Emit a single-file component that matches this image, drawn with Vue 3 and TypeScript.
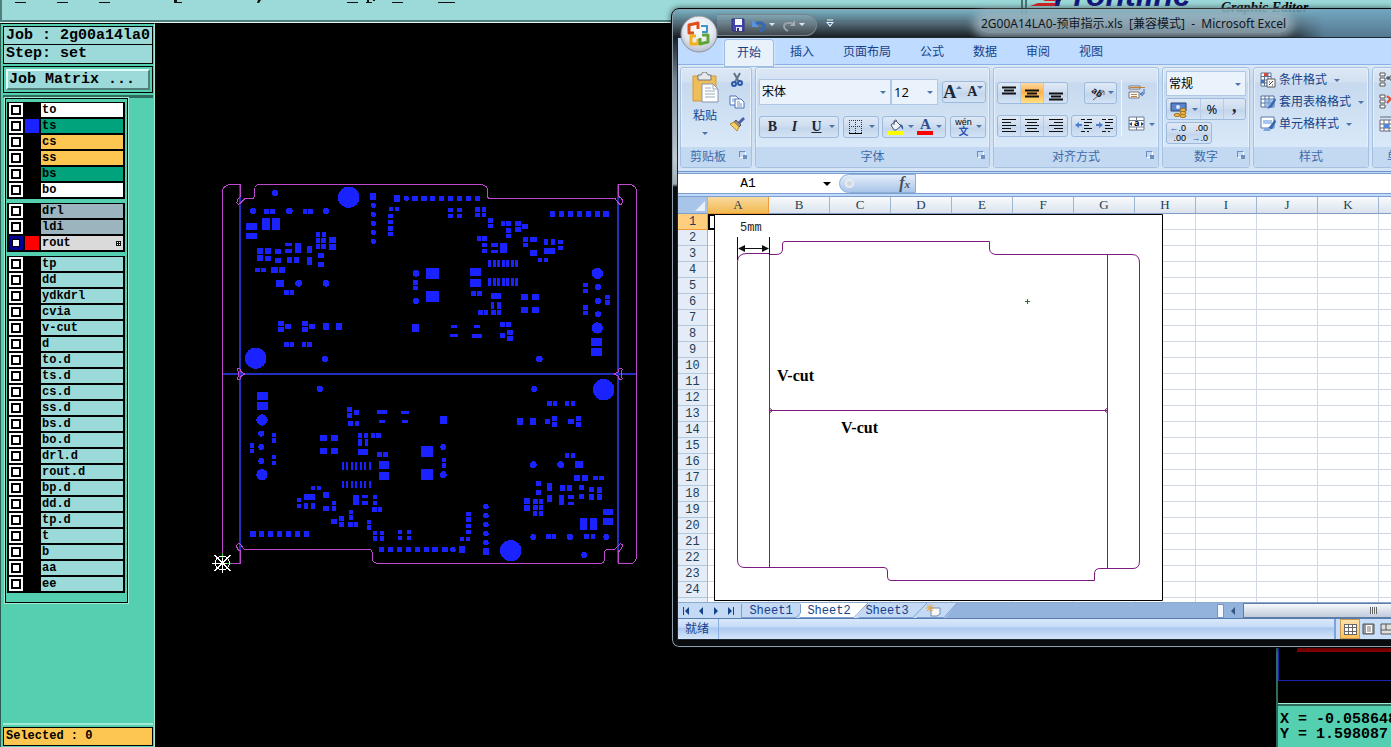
<script setup lang="ts">
import { ref } from 'vue'

interface Layer {
  name: string
  tone: string
  swatch?: string
  work?: boolean
}

const plain = (names: string): Layer[] => names.split(' ').map((name) => ({ name, tone: 'aqua' }))

const layerGroups: Layer[][] = [
  [
    { name: 'to', tone: 'white' },
    { name: 'ts', tone: 'green', swatch: 'blue' },
    { name: 'cs', tone: 'amber' },
    { name: 'ss', tone: 'amber' },
    { name: 'bs', tone: 'green' },
    { name: 'bo', tone: 'white' },
  ],
  [
    { name: 'drl', tone: 'slate' },
    { name: 'ldi', tone: 'slate' },
    { name: 'rout', tone: 'grey', swatch: 'red', work: true },
  ],
  plain('tp dd ydkdrl cvia v-cut d to.d ts.d cs.d ss.d bs.d bo.d drl.d rout.d bp.d dd.d tp.d t b aa ee'),
]

// Board units: three per screen pixel. Each pad is x, y, width, height.
type Pad = [number, number, number, number]
type Disc = [number, number, number]

const row = (xs: number[], y: number, w: number, h: number): Pad[] => xs.map((x) => [x, y, w, h])

const leftPads: Pad[] = [
  [465, 54, 19, 21], [537, 60, 19, 20], [590, 64, 18, 13], [618, 64, 18, 13],
  [147, 102, 14, 14], [165, 102, 15, 14], [264, 102, 12, 14], [279, 102, 15, 14],
  [93, 144, 32, 20], [93, 174, 32, 17], [141, 129, 23, 35], [171, 129, 23, 35],
  [303, 171, 12, 14], [321, 171, 12, 14], [303, 189, 12, 14], [319, 189, 14, 14],
  [303, 207, 12, 14], [319, 207, 14, 14], [342, 186, 20, 18], [342, 207, 20, 17],
  [210, 204, 20, 9], [210, 223, 20, 10], [240, 204, 17, 30], [276, 213, 15, 22],
  [276, 246, 15, 24], [309, 234, 17, 15], [309, 261, 17, 14],
  [126, 219, 17, 17], [150, 219, 17, 17], [126, 240, 17, 17], [150, 243, 17, 15],
  [180, 222, 17, 14], [180, 249, 17, 14], [216, 246, 15, 17], [237, 246, 15, 17],
  [120, 279, 15, 12], [138, 279, 15, 12], [168, 276, 20, 17], [192, 276, 18, 17],
  [183, 315, 24, 21], [207, 345, 14, 14], [225, 345, 12, 14],
  [189, 438, 17, 15], [189, 456, 17, 14], [210, 447, 18, 14],
  [261, 438, 17, 15], [261, 456, 17, 14], [282, 447, 17, 14],
  [324, 444, 18, 20], [363, 444, 18, 20],
  [207, 501, 14, 14], [225, 501, 12, 14], [261, 501, 12, 14], [276, 501, 15, 14],
  [519, 117, 15, 12], [519, 135, 15, 12], [519, 153, 15, 14], [519, 171, 15, 11],
  [522, 96, 12, 13], [540, 96, 12, 13], [594, 315, 14, 14], [594, 333, 14, 11],
  [591, 447, 21, 23], [633, 280, 38, 31], [633, 348, 38, 32],
]

const rightPads: Pad[] = [
  ...row([15, 42, 69, 96, 123, 150], 63, 15, 14),
  [69, 99, 14, 12], [69, 117, 14, 12], [96, 99, 14, 12], [96, 117, 14, 12],
  [150, 96, 14, 14], [171, 96, 12, 14], [150, 114, 14, 11], [171, 114, 12, 11],
  [189, 129, 14, 15], [189, 147, 14, 12], [228, 138, 12, 15], [243, 138, 15, 15],
  [270, 138, 17, 15], [270, 156, 17, 14], [291, 147, 18, 14], [243, 159, 14, 15],
  [243, 177, 14, 12], [156, 183, 12, 14], [171, 183, 15, 14], [171, 204, 14, 12],
  [171, 222, 14, 12], [198, 204, 20, 12], [198, 225, 20, 8], [225, 204, 20, 30],
  [294, 186, 14, 15], [294, 204, 14, 12], [315, 186, 20, 15], [315, 225, 20, 17],
  [357, 192, 12, 17], [378, 192, 12, 17], [399, 195, 14, 13], [399, 213, 14, 11],
  [357, 219, 33, 19], [339, 249, 12, 12], [357, 249, 12, 12],
  ...row([189, 204, 216, 231, 243, 258, 270], 255, 8, 20),
  ...row([189, 204, 216, 231, 243, 258, 270], 309, 8, 24),
  [135, 279, 32, 24], [135, 312, 32, 24], [138, 348, 15, 14], [156, 348, 15, 14],
  [198, 354, 30, 18], [198, 381, 9, 20], [216, 381, 12, 20],
  [159, 405, 15, 15], [177, 405, 12, 15], [198, 405, 14, 15], [216, 405, 12, 15],
  [288, 357, 21, 18], [321, 357, 22, 18], [288, 396, 21, 18], [321, 396, 22, 18],
  [225, 441, 14, 14], [243, 441, 15, 14], [246, 465, 17, 15], [225, 474, 15, 15],
  [246, 483, 17, 14], [78, 450, 18, 9], [75, 478, 24, 8], [147, 450, 18, 9], [141, 477, 30, 11],
  [474, 324, 14, 12], [474, 342, 14, 12], [474, 390, 14, 15], [474, 408, 14, 12],
  [540, 360, 14, 12], [540, 375, 14, 14], [498, 489, 33, 24], [498, 519, 33, 24],
  ...row([375, 402, 429, 456, 483, 510], 108, 15, 18),
  [534, 108, 19, 18],
]

const pads: Pad[] = [...leftPads, ...rightPads.map(([x, y, w, h]): Pad => [x + 630, y, w, h])]

const discs: Disc[] = [
  [401, 67, 32], [122, 550, 32], [180, 54, 9], [114, 108, 9], [223, 108, 10], [333, 108, 9],
  [251, 325, 10], [333, 325, 10], [330, 552, 9], [603, 295, 10], [603, 378, 9],
  [475, 91, 8], [475, 118, 8], [475, 145, 8], [475, 172, 8], [475, 199, 8], [574, 70, 8],
  [973, 552, 10], [1147, 295, 17], [1149, 336, 9], [1149, 378, 9], [1149, 418, 9], [1147, 459, 17],
]

const title = '2G00A14LA0-预审指示.xls  [兼容模式]  -  Microsoft Excel'
const ribbonTabs = ['开始', '插入', '页面布局', '公式', '数据', '审阅', '视图']
const activeTab = ref('开始')
const columns = 'ABCDEFGHIJKL'.split('')
const rows = Array.from({ length: 24 }, (_, i) => i + 1)
const sheets = ['Sheet1', 'Sheet2', 'Sheet3']
const activeSheet = ref('Sheet2')
const font = ref('宋体')
const fontSize = ref('12')
const numberFormat = ref('常规')
const nameBox = ref('A1')
const formula = ref('')
</script>

<template>
  <div class="desktop">
    <header class="topbar">
      <div class="path-field">
        <svg class="path-tail" width="480" height="6" aria-hidden="true">
          <path d="M10 2.500h11M52 2.500h11M94 2.500h11M342 2.500h11M387 2.500h11M433 2.500h17M169 2.500h8M361 2.500h6" stroke="#111" stroke-width="1" />
          <path d="M169 0h3v3h-3zM253 0h3l-2 3h-2zM362 0h2v3h-2zM368 0h2v1h-2z" fill="#111" />
        </svg>
      </div>
      <div class="brand">
        <svg class="brand-mark" width="34" height="8" aria-hidden="true"><path d="M15 0h16v1H13zM8 3h20v3H0z" fill="#e01818" /></svg>
        <span class="brand-name">Frontline</span>
        <span class="brand-sub">Graphic Editor</span>
      </div>
    </header>

    <div class="body">
      <aside class="sidebar">
        <div class="job-box">
          <div class="job-line">Job : 2g00a14la0</div>
          <div class="job-line">Step: set</div>
        </div>
        <div class="matrix-frame"><button class="matrix">Job Matrix ...</button></div>
        <div class="layer-zone">
          <div class="layer-panel">
            <div v-for="(group, g) in layerGroups" :key="g" class="layer-group">
              <label v-for="layer in group" :key="layer.name" class="layer">
                <input type="checkbox" :class="{ work: layer.work }" />
                <i class="swatch" :class="layer.swatch"></i>
                <span class="layer-name" :class="layer.tone">{{ layer.name }}
                  <svg v-if="layer.work" width="5" height="7" viewBox="0 0 5 7" shape-rendering="crispEdges"><path d="M0 1h5v5H0z" fill="#111" /><path d="M1 2h1v1H1zM3 2h1v1H3zM1 4h1v1H1zM3 4h1v1H3z" fill="#fff" /></svg>
                </span>
              </label>
            </div>
          </div>
        </div>
        <div class="selected">Selected : 0</div>
      </aside>

      <main class="canvas">
        <svg class="board" width="440" height="404" viewBox="-30 0 1320 1212">
          <g stroke="#242fbe" stroke-width="6">
            <path d="M75 28V1165M1209 28V1165M22 597H1262" />
          </g>
          <g v-for="turn in [0, 180]" :key="turn" :transform="`rotate(${turn} 644 597)`" fill="#1a22ff">
            <rect v-for="(p, i) in pads" :key="i" :x="p[0]" :y="p[1]" :width="p[2]" :height="p[3]" />
            <circle v-for="(d, i) in discs" :key="i" :cx="d[0]" :cy="d[1]" :r="d[2]" />
            <path d="M77 64Q64 76 66 84Q72 92 78 82L89 71H112Q119 69 119 58V42Q120 29 133 29H802Q817 33 817 46V62Q818 71 828 71H1200L1212 86Q1220 92 1223 80Q1222 70 1211 64" fill="none" stroke="#c048d0" stroke-width="3" />
            <path d="M66 582Q78 578 78 590L90 597L78 604Q78 618 66 612L70 604V590z" fill="none" stroke="#c048d0" stroke-width="3" />
          </g>
          <g fill="none" stroke="#c048d0" stroke-width="3">
            <path d="M77 66V29H42Q22 34 22 52V1165H77V1124" />
            <path d="M1211 66V29H1248Q1264 34 1264 50V1148Q1260 1165 1248 1165H1211V1124" />
          </g>
          <path d="M22 1164V1134M22 1164H52" stroke="#30c040" stroke-width="3" />
          <g stroke="#fff" stroke-width="3" fill="none">
            <circle cx="22" cy="1164" r="21" />
            <path d="M-8 1164H36M22 1150V1195M-2 1140L46 1188M46 1140L-2 1188" />
          </g>
        </svg>
      </main>

      <aside class="readout">
        <div class="overview"><div class="red-bar"></div><div class="blue-box"></div></div>
        <pre class="coords">X = -0.058648
Y = 1.598087</pre>
      </aside>
    </div>

    <section class="excel">
      <div class="titlebar">
        <div class="quick">
          <button aria-label="Save"><svg width="16" height="16"><path d="M2 2h12v12H3l-1-1z" fill="#4345ad" stroke="#30307f" /><path d="M5 2h7v6H5z" fill="#f3f6fb" /><path d="M6 10h6v4H6z" fill="#dfe4f5" /><path d="M7 11h2v3H7z" fill="#30307f" /></svg></button>
          <button aria-label="Undo"><svg width="16" height="16"><path d="M5 6h5q4 1 3 5-1 2-4 3" fill="none" stroke="#3567b7" stroke-width="3" /><path d="M1 3v7h7z" fill="#5b93dc" /></svg></button>
          <i class="caret pale"></i>
          <button aria-label="Redo"><svg width="16" height="16"><path d="M11 6H7Q3 6 3 10q1 3 4 4" fill="none" stroke="#99a0a8" stroke-width="2" /><path d="M14 3v6H9z" fill="#a7adb3" /></svg></button>
          <i class="caret pale"></i>
        </div>
        <svg class="customize" width="8" height="9"><path d="M1 1h6" stroke="#e9f2fa" /><path d="M0 3h8L4 8z" fill="#e9f2fa" /><path d="M2 4h4L4 6z" fill="#2e669c" /></svg>
        <h1>{{ title }}</h1>
      </div>
      <button class="orb" aria-label="Office">
        <svg width="38" height="38" viewBox="0 0 38 38">
          <defs><radialGradient id="orbFill" cx=".5" cy=".35" r=".7"><stop offset="0" stop-color="#fff" /><stop offset=".6" stop-color="#e3e7ee" /><stop offset="1" stop-color="#aab4c6" /></radialGradient></defs>
          <circle cx="19" cy="19" r="18" fill="url(#orbFill)" stroke="#8d949f" />
          <g fill="none" stroke-width="3" stroke-linejoin="round">
            <path d="M14 18l-5 0V10l9-2v6" stroke="#df5018" />
            <path d="M21 11h6v6h-5" stroke="#3c93cf" stroke-width="2" />
            <path d="M16 21h-5v8l7 0v-5" stroke="#f2b21c" />
            <path d="M22 20h6v7l-8 2v-6" stroke="#5fa63a" />
          </g>
        </svg>
      </button>

      <div class="client">
        <nav class="tabs">
          <button v-for="tab in ribbonTabs" :key="tab" :class="{ active: tab === activeTab }" @click="activeTab = tab">{{ tab }}</button>
        </nav>

        <div class="ribbon">
          <section class="group clipboard">
            <div class="controls">
              <button class="paste">
                <svg width="28" height="32"><path d="M2 4h23v25H2z" fill="#f0bd5b" stroke="#d39a39" /><path d="M7 3h3l2-3h3l2 3h3v5H7z" fill="#e5e7ea" stroke="#777" /><path d="M11 12h11l5 5v13H11z" fill="#fff" stroke="#8794ab" /><path d="M22 12v5h5M14 16h6M14 19h10M14 22h10M14 25h10" fill="none" stroke="#9ca9bd" /></svg>
                <span>粘贴</span><i class="caret"></i>
              </button>
              <div class="stack">
                <button aria-label="Cut"><svg width="16" height="16"><path d="M5 1l5 9M11 1L6 10" stroke="#64748d" stroke-width="2" /><g fill="none" stroke="#2c58a8" stroke-width="2"><circle cx="5" cy="12" r="2" /><circle cx="11" cy="11" r="2" /></g></svg></button>
                <button aria-label="Copy"><svg width="16" height="16"><g fill="#fff" stroke="#4971b4"><path d="M1 2h6l3 3v6H1z" /><path d="M6 5h6l3 3v6H6z" /></g><path d="M3 5h3M3 7h3M8 8h3M8 10h5M8 12h5" stroke="#6e94cf" /></svg></button>
                <button aria-label="Format painter"><svg width="16" height="16"><path d="M14 1l2 2-5 5-2-2z" fill="#4c5fa8" /><path d="M7 4l5 5-2 2-5-5z" fill="#8d8d8d" stroke="#555" /><path d="M1 8l4-2 5 5-2 4z" fill="#f4d06d" stroke="#b28b29" /></svg></button>
              </div>
            </div>
            <footer>剪贴板<i class="launcher"></i></footer>
          </section>

          <section class="group fonts">
            <div class="controls rows">
              <div class="line">
                <span class="pick wide"><select v-model="font" aria-label="Font"><option>宋体</option></select></span><span class="pick size"><select v-model="fontSize" aria-label="Font size"><option>12</option></select></span>
                <div class="bunch push"><button class="serif big" aria-label="Grow font">A<i class="tri up"></i></button><button class="serif" aria-label="Shrink font">A<i class="tri"></i></button></div>
              </div>
              <div class="line">
                <div class="bunch"><button class="serif">B</button><button class="serif ital">I</button><button class="serif under">U</button><i class="caret"></i></div>
                <div class="bunch"><button aria-label="Borders"><svg width="16" height="16" shape-rendering="crispEdges"><path d="M1 1.500h13M1 7.500h13M1.500 1v13M7.500 1v13M13.500 1v13" stroke="#333" stroke-dasharray="1 1" /><path d="M1 14.500h13" stroke="#000" /></svg></button><i class="caret"></i></div>
                <div class="bunch"><button aria-label="Fill colour"><svg width="16" height="16"><path d="M3 6l5-4 5 5-5 4H6z" fill="#f1f4f9" stroke="#49556b" /><path d="M6 6V2q2-2 3 0" fill="none" stroke="#49556b" /><path d="M12 5q4 1 3 6l-2-3z" fill="#2e5eaa" /><path d="M0 12h16v4H0z" fill="#ff0" /></svg></button><i class="caret"></i><button class="serif tint" aria-label="Font colour">A</button><i class="caret"></i></div>
                <div class="bunch"><button class="wen" aria-label="Phonetic guide"><span>wén</span><b>文</b></button><i class="caret"></i></div>
              </div>
            </div>
            <footer>字体<i class="launcher"></i></footer>
          </section>

          <section class="group align">
            <div class="controls split">
              <div class="rows">
                <div class="line">
                  <div class="bunch even">
                    <button aria-label="Top align"><svg width="16" height="16"><path d="M1 2.500h14M3 5.500h10M1 8.500h14" stroke="#111" stroke-width="2" /></svg></button>
                    <button class="on" aria-label="Middle align"><svg width="16" height="16"><path d="M1 5.500h14M3 8.500h10M1 11.500h14" stroke="#111" stroke-width="2" /></svg></button>
                    <button aria-label="Bottom align"><svg width="16" height="16"><path d="M1 8.500h14M3 11.500h10M1 14.500h14" stroke="#111" stroke-width="2" /></svg></button>
                  </div>
                  <div class="bunch"><button class="orient" aria-label="Orientation"><svg width="18" height="18"><path d="M5 16L16 7M12 7h4v4" fill="none" stroke="#666" /><text x="3" y="9" transform="rotate(35 5 8)" font-size="9" font-weight="700" fill="#222">ab</text></svg></button><i class="caret"></i></div>
                </div>
                <div class="line">
                  <div class="bunch even">
                    <button aria-label="Align left"><svg width="16" height="16"><path d="M1 1.500h14M1 4.500h9M1 7.500h14M1 10.500h9M1 13.500h14" stroke="#111" /></svg></button>
                    <button aria-label="Align centre"><svg width="16" height="16"><path d="M1 1.500h14M3 4.500h10M1 7.500h14M3 10.500h10M1 13.500h14" stroke="#111" /></svg></button>
                    <button aria-label="Align right"><svg width="16" height="16"><path d="M1 1.500h14M6 4.500h9M1 7.500h14M6 10.500h9M1 13.500h14" stroke="#111" /></svg></button>
                  </div>
                  <div class="bunch">
                    <button aria-label="Decrease indent"><svg width="18" height="16"><path d="M6 1.500h4M12 1.500h5M9 4.500h8M9 7.500h5M9 10.500h8M6 13.500h4M12 13.500h2" stroke="#111" /><path d="M0 7l4-3v2h3v2H4v2z" fill="#4a7ed0" /></svg></button>
                    <button aria-label="Increase indent"><svg width="18" height="16"><path d="M6 1.500h4M12 1.500h5M9 4.500h8M9 7.500h5M9 10.500h8M6 13.500h4M12 13.500h2" stroke="#111" /><path d="M7 7L3 4v2H0v2h3v2z" fill="#4a7ed0" /></svg></button>
                  </div>
                </div>
              </div>
              <div class="rows side">
                <div class="line"><button aria-label="Wrap text"><svg width="17" height="16"><path d="M1 2h11v3H1zM1 8h10v6H1z" fill="#fff" stroke="#777" /><path d="M2 3.500h15M3 10.500h6M3 12.500h6" stroke="#c97e38" /><path d="M16 5v5h-3M15 8l-3 2 3 2" stroke="#3c69b4" fill="none" /></svg></button></div>
                <div class="line"><button aria-label="Merge and centre"><svg width="17" height="16"><path d="M1 1h15v13H1zM1 4.500h15M1 11h15M8.500 1v3M8.500 11v3" fill="#fff" stroke="#6d7b90" /><path d="M1 8l3-2v4zM16 8l-3-2v4z" fill="#24467f" /><text x="6" y="10" font-size="9" font-weight="700">a</text></svg></button><i class="caret"></i></div>
              </div>
            </div>
            <footer>对齐方式<i class="launcher"></i></footer>
          </section>

          <section class="group number">
            <div class="controls tight">
              <span class="pick full"><select v-model="numberFormat" aria-label="Number format"><option>常规</option></select></span>
              <div class="bunch even">
                <button class="money" aria-label="Accounting format"><svg width="17" height="17"><path d="M1 2h15v8H1z" fill="#5c83c8" stroke="#24477f" /><circle cx="8" cy="6" r="2" fill="#dce9ff" /><g fill="#f4bd43" stroke="#a4701b"><ellipse cx="13" cy="9" rx="3" ry="1.500" /><ellipse cx="13" cy="12" rx="3" ry="1.500" /><ellipse cx="7" cy="14" rx="3" ry="1.500" /><ellipse cx="13" cy="15" rx="3" ry="1.500" /></g></svg><i class="caret"></i></button>
                <button class="percent">%</button><button class="serif comma">,</button>
              </div>
              <div class="bunch short">
                <button class="decimals"><span><b>←</b>.0</span><span>.00</span></button><button class="decimals"><span>.00</span><span><b>→</b>.0</span></button>
              </div>
            </div>
            <footer>数字<i class="launcher"></i></footer>
          </section>

          <section class="group styles">
            <div class="controls list">
              <button><svg width="16" height="16"><path d="M1 1h10v13H1zM1 4.500h10M1 8h10M1 11h10M4.500 1v13M8 1v13" fill="#fff" stroke="#5c7096" /><path d="M4 1h4v3H4z" fill="#d84b32" /><path d="M1 8h3v3H1z" fill="#3d72c1" /><path d="M7 7h8v8H7z" fill="#fff" stroke="#555" /><path d="M9 13l4-4M9 10h1M12 13h1" stroke="#333" /></svg>条件格式<i class="caret"></i></button>
              <button><svg width="16" height="16"><path d="M1 2h13v11H1zM1 5h13M1 9h13M5 2v11M9 2v11" fill="#fff" stroke="#4e6c9d" /><path d="M5 5h9v8H5z" fill="#79a5e0" opacity=".7" /><path d="M15 4l-5 7-3 4 5-2 4-7z" fill="#3768af" /></svg>套用表格格式<i class="caret"></i></button>
              <button><svg width="16" height="16"><path d="M1 1h13v11H1z" fill="#fff" stroke="#5878a9" /><path d="M3 4h9v4H3z" fill="#a8c5ec" /><path d="M15 3l-5 7-4 4 6-1 4-7z" fill="#3768af" /><path d="M5 12h5v3H3z" fill="#7da4dd" /></svg>单元格样式<i class="caret"></i></button>
            </div>
            <footer>样式</footer>
          </section>

          <section class="group cells">
            <div class="controls list">
              <button><svg width="16" height="16"><path d="M1 1h5v3H1zM1 6h5v3H1zM1 11h5v3H1zM11 4h5v4h-5z" fill="#fff" stroke="#555" /><path d="M7 6h4M9 4v4" stroke="#234" /></svg></button>
              <button><svg width="16" height="16"><path d="M1 1h5v3H1zM1 6h5v3H1zM1 11h5v3H1z" fill="#fff" stroke="#555" /><path d="M8 2l8 7M15 1L8 9" stroke="#e24a2c" stroke-width="2" /></svg></button>
              <button><svg width="16" height="16"><path d="M1 4h14v11H1zM1 8h14M1 12h14M5 4v11M10 4v11M1 1h14" fill="#fff" stroke="#667" /><path d="M5 8h5v4H5z" fill="#4d85d8" /></svg></button>
            </div>
            <footer>单元格</footer>
          </section>
        </div>

        <div class="formula-bar">
          <input v-model="nameBox" class="name-box" aria-label="Name box" />
          <i class="tri dark"></i>
          <div class="fx"><i class="knob"></i><span>f<small>x</small></span></div>
          <input v-model="formula" class="formula" aria-label="Formula" />
        </div>

        <div class="sheet">
          <table>
            <thead>
              <tr><th class="corner"><svg width="10" height="10"><path d="M10 0v10H0z" fill="#e8f0fa" /></svg></th><th v-for="c in columns" :key="c" :class="{ hot: c === 'A' }">{{ c }}</th></tr>
            </thead>
            <tbody>
              <tr v-for="r in rows" :key="r"><th :class="{ hot: r === 1 }">{{ r }}</th><td v-for="c in columns" :key="c" :class="{ cursor: r === 1 && c === 'A' }"></td></tr>
              <tr class="sliver"><th></th><td v-for="c in columns" :key="c"></td></tr>
            </tbody>
          </table>
          <svg class="drawing" width="449" height="387" viewBox="0 0 449 387">
            <path d="M.5.500h448v386H.5z" fill="#fff" stroke="#000" />
            <g fill="none" stroke="#7d1a7d">
              <path d="M23.500 346V48Q23.500 39.500 33 39.500H55.500V354M55.500 40.500H62Q68.500 40.500 68.500 35V30Q68.500 27.500 71 27.500H275.500V35Q276 40.500 283 40.500H418Q425.500 40.500 425.500 49V347Q425.500 354.500 419 354.500H386Q380.500 354.500 380.500 360V366.500H177Q173.500 366.500 173.500 363V357Q173.500 353.500 170 353.500H30Q23.500 353 23.500 346" />
              <path d="M393.500 41V354M55.500 196.500H393.500M55.500 194l3 2.500-3 2.500M393.500 194l-3 2.500 3 2.500" />
            </g>
            <path d="M23.500 23V46M55.500 23V41M28 34.500H52" stroke="#111" fill="none" />
            <path d="M24 34.500l7-3.500v7zM55 34.500l-7-3.500v7z" fill="#111" />
            <path d="M311 87.500h5M313.500 85v5" stroke="#2a6a2a" />
            <text x="26" y="17" class="mono">5mm</text>
            <text x="63" y="167" class="cut">V-cut</text>
            <text x="127" y="219" class="cut">V-cut</text>
          </svg>
        </div>

        <div class="sheet-strip">
          <svg class="tab-shapes" width="290" height="16">
            <path d="M0 0H279L267 15H0z" fill="#c3d9f4" />
            <path d="M122 0H190L177 15H122z" fill="#fff" />
            <path d="M63.500 1V14.500H118L122.500 10V1M122 14.500H176L190 0M181 14.500H235L249 0M239 14.500H266L279 0" fill="none" stroke="#7c9fce" />
          </svg>
          <div class="nav">
            <button aria-label="First sheet"><svg width="8" height="8"><path d="M1 0h1v8H1zM7 0v8L3 4z" fill="#15428b" /></svg></button>
            <button aria-label="Previous sheet"><svg width="8" height="8"><path d="M6 0v8L2 4z" fill="#15428b" /></svg></button>
            <button aria-label="Next sheet"><svg width="8" height="8"><path d="M2 0v8l4-4z" fill="#15428b" /></svg></button>
            <button aria-label="Last sheet"><svg width="8" height="8"><path d="M6 0h1v8H6zM1 0v8l4-4z" fill="#15428b" /></svg></button>
          </div>
          <button v-for="s in sheets" :key="s" class="sheet-tab" @click="activeSheet = s">{{ s }}</button>
          <button class="new-sheet" aria-label="New sheet"><svg width="16" height="14"><path d="M5 4h9v6l-3 2H5z" fill="#f7f9fd" stroke="#7b8ba6" /><path d="M4 0v8M0 4h8M1 1l6 6M7 1L1 7" stroke="#e8a33a" /></svg></button>
          <div class="scroll"><i class="splitter"></i><i class="arrow"></i><div class="thumb"><i></i></div></div>
        </div>

        <div class="status">
          <span>就绪</span>
          <div class="views">
            <button class="on" aria-label="Normal"><svg width="13" height="11" shape-rendering="crispEdges"><path d="M.5.500h12v10H.5zM0 3.500h13M0 7.500h13M4.500 0v11M8.500 0v11" fill="#fff" stroke="#666" /></svg></button>
            <button aria-label="Page layout"><svg width="13" height="12"><path d="M1 1h11v10H1z" fill="#999" stroke="#555" /><path d="M4 2h6v8H4z" fill="#fff" /><path d="M5 4h4M5 6h4M5 8h4" stroke="#777" /></svg></button>
            <button aria-label="Page break preview"><svg width="13" height="12"><path d="M1 1h11v10H1z" fill="#ddd" stroke="#555" /><path d="M6 1v6M1 7h11" stroke="#555" /></svg></button>
          </div>
        </div>
      </div>
    </section>
  </div>
</template>

<style>
html, body { margin: 0; background: #000; overflow: hidden; }
</style>

<style scoped>
.desktop, .desktop * { box-sizing: border-box; }
.desktop { position: relative; height: 100vh; overflow: hidden; display: flex; flex-direction: column; background: #000; color: #000; font: 12px/16px "Open Sans", "Noto Sans CJK SC", sans-serif; }
button { border: 0; padding: 0; margin: 0; background: none; color: inherit; font: inherit; white-space: nowrap; }
svg { display: block; flex: none; }
input, select { font: inherit; margin: 0; }

.topbar { flex: none; height: 23px; display: flex; background: #9cdada; border-bottom: 1px solid #e4f7f4; overflow: hidden; }
.path-field { width: 1023px; padding-left: 3px; border-left: 2px solid #51807c; border-right: 2px solid #447471; border-bottom: 2px solid #51807c; }
.brand { flex: 1; display: flex; border-left: 2px solid #447471; margin-left: 2px; padding-left: 3px; white-space: nowrap; }
.brand-name { font: italic bold 32px/32px "Liberation Sans", sans-serif; color: #10137c; margin-top: -21px; margin-left: -10px; }
.brand-sub { font: italic bold 14px/16px "Liberation Serif", serif; margin-left: 30px; }

.body { flex: 1; min-height: 0; display: flex; }
.sidebar { width: 155px; flex: none; display: flex; flex-direction: column; padding: 2px 1px 1px 2px; background: #54d0b0; border-top: 1px solid #000; border-left: 1px solid #2b5e50; border-right: 1px solid #a0ead6; font-family: "Liberation Mono", monospace; font-weight: bold; }
.job-box { border: 1px solid #000; background: #9cdada; padding-bottom: 1px; }
.job-line { font-size: 15px; line-height: 17px; padding-left: 2px; }
.job-line + .job-line { border-top: 1px solid #000; }
.matrix-frame { margin-top: 2px; border: 1px solid #000; padding: 2px; }
.matrix { display: block; width: 100%; height: 21px; padding-left: 1px; text-align: left; font-size: 15px; line-height: 17px; background: #9cdada; border: 2px solid; border-color: #e2fbf8 #51807c #51807c #e2fbf8; }
.layer-zone { flex: 1; margin-top: 2px; border-top: 3px solid #2f6b5c; border-bottom: 2px solid #a0ead6; }
.layer-panel { width: 123px; padding: 3px 2px 9px 1px; border: 1px solid #000; outline: 1px solid #a0ead6; display: flex; flex-direction: column; gap: 4px; margin-left: 2px; }
.layer-group { background: #000; padding: 1px 2px 0 2px; }
.layer { display: flex; height: 16px; gap: 2px; }
.layer input { appearance: none; width: 14px; height: 14px; flex: none; background: #fff; box-shadow: inset 0 0 0 2px #fff, inset 0 0 0 4px #000; }
.layer input.work { box-shadow: inset 0 0 0 3px #000094, inset 0 0 0 4px #000; }
.swatch { width: 14px; height: 14px; flex: none; }
.swatch.blue { background: #1a22ff; }
.swatch.red { background: #f00; }
.layer-name { flex: 1; height: 14px; display: flex; align-items: center; justify-content: space-between; padding: 0 2px 0 1px; font-size: 12px; line-height: 14px; }
.white { background: #fff; }
.green { background: #00a37b; }
.amber { background: #fcc650; }
.slate { background: #9bb4bd; }
.grey { background: #dadada; }
.aqua { background: #9cdada; }
.selected { border: 1px solid #000; background: #fcc650; padding-left: 2px; line-height: 17px; font-size: 12px; margin-top: 2px; }

.canvas { flex: 1; min-width: 0; position: relative; overflow: hidden; }
.board { position: absolute; left: 50px; top: 152px; shape-rendering: crispEdges; }

.readout { width: 115px; flex: none; align-self: flex-end; overflow: hidden; border-left: 2px solid #2f6b5c; }
.overview { height: 105px; padding-top: 49px; }
.red-bar { height: 5px; margin-left: 19px; background: #8f0000; }
.blue-box { height: 34px; border: 1px solid #1c22b0; border-top: 0; border-right: 0; margin: -5px -2px 0 0; }
.coords { margin: 0; border-top: 1px solid #a0ead6; box-shadow: inset 0 2px #2f6b5c; background: #54d0b0; padding: 8px 0 5px 2px; font: bold 15px/15px "Liberation Mono", monospace; }

.excel { position: absolute; left: 671px; right: -2px; top: 8px; padding: 0 0 7px 5px; border: 1px solid #05080a; border-radius: 8px 0 0 8px; box-shadow: inset 0 0 0 1px #8fa0ac, 0 0 6px rgba(0, 0, 0, .6); background: linear-gradient(#6fa9c0c0 0, #536c79 14px, #1a1e22 28px, #77838c 70px, #c0cad0 150px, #a0abb2 175px, #0a0b0d 178px, #0a0b0d 100%); }
.titlebar { height: 28px; display: flex; align-items: center; background: linear-gradient(90deg, transparent 84%, #6da0bfb0 90%); margin-left: 40px; }
.quick { width: 100px; height: 22px; display: flex; align-items: center; gap: 5px; padding-left: 13px; border: 1px solid #79858e; border-left: 0; border-radius: 0 11px 11px 0; background: #ffffff25; margin-top: 3px; }
.caret, .tri { width: 0; height: 0; border: 3px solid transparent; border-top-color: #4d74a6; border-bottom: 0; flex: none; }
.caret.pale { border-top-color: #dbe6ef; }
.quick .caret { margin-left: -3px; margin-right: 1px; }
.customize { margin-left: 9px; }
h1 { margin: 2px 0 0 144px; padding: 0 3px; font: 12px/18px "Noto Sans", "Noto Sans CJK SC", sans-serif; white-space: pre; color: #10161c; background: #a5bdc9b0; border-radius: 9px; box-shadow: 0 0 8px 5px #a5bdc9b0; }
.orb { position: absolute; left: 8px; top: 6px; z-index: 2; }

.client { position: relative; background: #bfdbff; border: 1px solid #1d2730; border-right: 0; overflow: hidden; }
.tabs { height: 26px; display: flex; gap: 5px; padding: 2px 0 0 47px; color: #15428b; }
.tabs button { height: 24px; padding: 0 12px; border-radius: 3px 3px 0 0; line-height: 22px; }
.tabs .active { background: #e9f1fb; box-shadow: 0 0 0 1px #9bbce6, 0 0 4px #fff; height: 26px; }

.ribbon { display: flex; gap: 3px; padding: 2px 2px 3px; border-top: 1px solid #8db2e3; background: linear-gradient(#dce8f6, #c6daf1 16px, #d5e5f7); border-bottom: 1px solid #6d93c4; }
.group { flex: none; height: 101px; display: flex; flex-direction: column; border: 1px solid #a6c1e0; border-radius: 3px; box-shadow: inset 0 0 0 1px #e6f0fb; background: linear-gradient(#dde8f5, #d2e0f1 14px, #c7d9ee 15px, #d9e9f9 80px); }
.group footer { position: relative; height: 20px; line-height: 20px; text-align: center; color: #3e6aaa; background: #c2d9f1; border-radius: 0 0 3px 3px; overflow: hidden; }
.clipboard footer { text-align: left; padding-left: 9px; }
.launcher { position: absolute; right: 5px; top: 4px; width: 7px; height: 7px; border: 1px solid #6c8fbd; border-right-color: #fff; border-bottom-color: #fff; }
.launcher::after { content: ""; position: absolute; left: 3px; top: 3px; width: 4px; height: 4px; background: #6c8fbd; }
.controls { height: 79px; flex: none; }
.clipboard { width: 72px; }
.clipboard .controls { display: flex; justify-content: space-between; padding: 4px 6px 0 10px; color: #15428b; }
.paste { display: flex; flex-direction: column; align-items: center; }
.paste span { line-height: 18px; margin: 3px 0 7px; }
.stack { display: flex; flex-direction: column; gap: 6px; }
.fonts { width: 235px; }
.align { width: 166px; }
.number { width: 88px; }
.styles { width: 116px; }
.cells { width: 90px; }
.cells footer { text-align: left; padding-left: 14px; }
.controls.rows { padding: 11px 3px 0; }
.rows { display: flex; flex-direction: column; gap: 10px; }
.line { display: flex; align-items: center; justify-content: space-between; height: 25px; }
.pick { position: relative; height: 26px; border: 1px solid #b0c8e6; background: #eaf2fb; }
.pick::after { content: ""; position: absolute; right: 4px; top: 11px; border: 3px solid transparent; border-top-color: #4d74a6; border-bottom: 0; pointer-events: none; }
.pick select { appearance: none; width: 100%; height: 100%; border: 0; background: none; padding: 0 2px; color: #000; display: block; }
.size select { font-size: 13px; }
.wide { width: 132px; }
.size { width: 47px; }
.push { margin-left: 4px; flex: 1; }
.bunch { display: flex; align-items: center; height: 22px; border: 1px solid #9db9dc; border-radius: 3px; background: linear-gradient(#dfe9f6, #cbdbee 10px, #c3d5eb 11px, #d3e3f5); gap: 3px; padding: 0 3px; }
.bunch button { height: 20px; min-width: 19px; display: flex; align-items: center; justify-content: center; gap: 5px; }
.push button { flex: 1; gap: 0; }
.bunch.push { padding: 0; }
.serif { font-family: "Liberation Serif", serif; font-weight: bold; font-size: 14px; color: #1c2530; }
.big { font-size: 18px; }
.ital { font-style: italic; }
.under { text-decoration: underline; }
.tri { align-self: flex-start; margin-top: 4px; }
.tri.up { transform: rotate(180deg); }
.tint { flex: none; color: #2e4f8f; border-bottom: 4px solid #f00; line-height: 11px; }
.bunch .tint { height: 17px; min-width: 16px; font-size: 15px; }
.bunch .wen { flex-direction: column; gap: 0; font: 9px/10px "Liberation Sans", "Noto Sans CJK SC", sans-serif; }
.wen b { color: #2f55b5; font-size: 10px; line-height: 10px; }
.even { padding: 0; gap: 0; }
.even button { flex: 1; border-right: 1px solid #b5cbe6; min-width: 23px; }
.even button:last-child { border-right: 0; }
.bunch .on { background: linear-gradient(#fcd9a3, #ffb24c 9px, #ffe07f); height: 20px; }
.split { display: flex; gap: 4px; padding: 12px 3px 0; }
.split .rows { gap: 8px; }
.split .line { gap: 3px; }
.split .side { border-left: 1px solid #f1f7fd; padding-left: 6px; margin: 0 0 11px; }
.split .side .line { justify-content: flex-start; gap: 4px; }
.split .bunch:not(.even) { padding: 0 2px; gap: 2px; }
.tight { padding: 3px; display: flex; flex-direction: column; gap: 2px; }
.tight .bunch button { min-width: 0; }
.tight .bunch .money { flex: none; width: 34px; }
.percent { font-size: 13px; }
.comma { font-size: 18px; line-height: 12px; padding-bottom: 6px; }
.bunch.short { align-self: flex-start; gap: 0; padding: 0; width: 46px; }
.bunch .decimals { flex: 1; flex-direction: column; gap: 0; font: 9px/10px "Liberation Sans", sans-serif; align-items: flex-end; padding-right: 3px; }
.decimals span { height: 10px; }
.decimals b { color: #2f64b7; }
.list { padding: 4px 6px; display: flex; flex-direction: column; gap: 6px; align-items: flex-start; color: #15428b; }
.list button { display: flex; align-items: center; gap: 3px; height: 16px; }
.list .caret { margin-left: 4px; }

.formula-bar { display: flex; height: 21px; margin-top: 1px; background: #fff; border: 1px solid #7f9fc9; border-width: 1px 0; }
.name-box { width: 140px; border: 0; text-align: center; font: 13px/18px "Liberation Mono", monospace; background: none; outline: 0; padding: 0; }
.formula-bar .dark { border-width: 4px; border-bottom-width: 0; border-top-color: #000; align-self: center; margin: 0 8px 0 5px; }
.fx { width: 77px; display: flex; justify-content: space-between; align-items: center; border: 1px solid #8caedb; border-radius: 10px 0 0 10px; background: linear-gradient(#e2edfa, #a9c5e8); padding: 0 5px; }
.fx span { font: italic bold 16px/16px "Liberation Serif", serif; color: #47505c; }
.fx small { font-size: 11px; }
.knob { width: 9px; height: 9px; border-radius: 50%; background: radial-gradient(#c4cfdb, #fff); }
.formula { flex: 1; min-width: 0; border: 0; outline: 0; }

.sheet { position: relative; margin-top: 2px; background: #fff; overflow: hidden; border-top: 1px solid #7f9fc9; }
table { border-collapse: separate; border-spacing: 0; table-layout: fixed; width: 762px; font: 12px/14px "Liberation Mono", monospace; color: #253d55; }
th { padding: 0; font-weight: normal; border-right: 1px solid #9eb6ce; border-bottom: 1px solid #b6c8de; background: #e4ecf7; height: 16px; }
thead th { height: 17px; width: 61px; font: 13px/14px "Liberation Serif", serif; background: linear-gradient(#f8fafc, #dbe3ed); border-bottom-color: #7f9fc9; }
thead .corner { width: 30px; background: #a9c4e9; }
.corner svg { margin: 2px 2px 0 auto; }
th.hot { background: #ffce7e; border-color: #ee9c38; }
thead th.hot { background: linear-gradient(#f9d99f, #f1b94f); }
td { padding: 0; height: 16px; border-right: 1px solid #d0d7e5; border-bottom: 1px solid #d0d7e5; }
td.cursor { border: 2px solid #000; }
.sliver th, .sliver td { height: 4px; border-bottom: 0; }
.drawing { position: absolute; left: 36px; top: 17px; }
.mono { font: 12px "Liberation Mono", monospace; fill: #222; }
.cut { font: bold 16px "Liberation Serif", serif; }

.sheet-strip { position: relative; display: flex; align-items: center; height: 16px; background: #94b3dc; border-top: 1px solid #8ba8cf; font: 12px/14px "Liberation Mono", monospace; color: #15428b; }
.tab-shapes { position: absolute; left: 0; top: 0; }
.nav { position: relative; display: flex; width: 64px; gap: 7px; padding-left: 4px; }
.sheet-tab { position: relative; width: 58px; }
.new-sheet { position: relative; margin-left: 10px; }
.scroll { flex: 1; display: flex; align-items: center; margin-left: 275px; height: 15px; }
.splitter { width: 7px; height: 14px; background: #f4f9ff; border: 1px solid #7896bf; flex: none; }
.arrow { border: 4px solid transparent; border-right-color: #33557f; border-left: 0; margin: 0 8px 0 7px; }
.thumb { flex: 1; height: 15px; border: 1px solid #5f7ba4; background: linear-gradient(#f6f8fb, #c1cbdc); display: flex; align-items: center; }
.thumb i { margin-left: 126px; width: 7px; height: 7px; flex: none; background: repeating-linear-gradient(90deg, #666 0 1px, #eee 1px 2px); }

.status { display: flex; align-items: center; height: 21px; border-top: 1px solid #567db1; background: linear-gradient(#d9e8fb, #c5dbf8 8px, #acc8ee 9px, #d5e5fa); color: #15428b; }
.status span { padding: 0 9px 0 7px; border-right: 1px solid #8baee0; line-height: 20px; }
.views { margin-left: auto; width: 58px; display: flex; height: 20px; border-left: 2px solid #7da3d8; padding: 1px 0 1px 5px; background: #c8def9; overflow: hidden; }
.views button { width: 18px; height: 18px; flex: none; display: flex; align-items: center; justify-content: center; }
.views .on { background: linear-gradient(#fce2ae, #ffc154); outline: 1px solid #c99b51; }
</style>
